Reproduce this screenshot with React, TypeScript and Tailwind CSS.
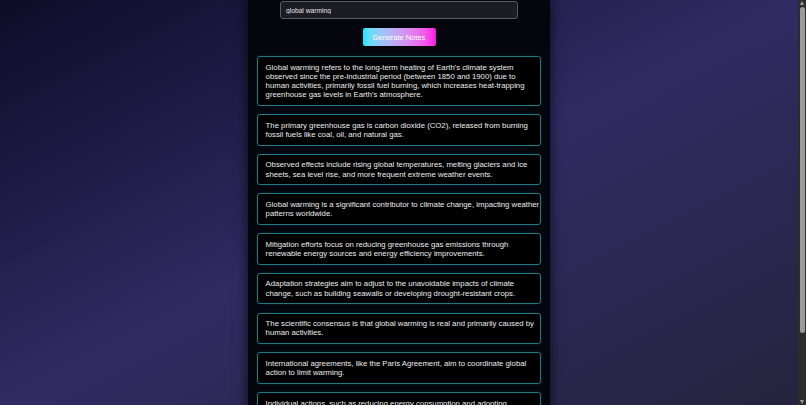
import React from "react";

const notes: string[][] = [
  [
    "Global warming refers to the long-term heating of Earth's climate system",
    "observed since the pre-industrial period (between 1850 and 1900) due to",
    "human activities, primarily fossil fuel burning, which increases heat-trapping",
    "greenhouse gas levels in Earth's atmosphere.",
  ],
  [
    "The primary greenhouse gas is carbon dioxide (CO2), released from burning",
    "fossil fuels like coal, oil, and natural gas.",
  ],
  [
    "Observed effects include rising global temperatures, melting glaciers and ice",
    "sheets, sea level rise, and more frequent extreme weather events.",
  ],
  [
    "Global warming is a significant contributor to climate change, impacting weather",
    "patterns worldwide.",
  ],
  [
    "Mitigation efforts focus on reducing greenhouse gas emissions through",
    "renewable energy sources and energy efficiency improvements.",
  ],
  [
    "Adaptation strategies aim to adjust to the unavoidable impacts of climate",
    "change, such as building seawalls or developing drought-resistant crops.",
  ],
  [
    "The scientific consensus is that global warming is real and primarily caused by",
    "human activities.",
  ],
  [
    "International agreements, like the Paris Agreement, aim to coordinate global",
    "action to limit warming.",
  ],
  [
    "Individual actions, such as reducing energy consumption and adopting",
    "sustainable practices, can help reduce carbon footprints.",
  ],
  [
    "Continued warming is projected to increase risks to ecosystems, food",
    "security, water supplies, and human health.",
  ],
];

export default function App() {
  return (
    <div
      className="flex h-screen w-full overflow-hidden"
      style={{ fontFamily: '"Liberation Sans", Arial, sans-serif' }}
    >
      <div className="h-full flex-1 overflow-hidden bg-linear-to-br from-[#0f0c29] via-[#302b63] to-[#24243e]">
        <div className="mx-auto flex min-h-full w-[302px] flex-col bg-[#05050d] px-[9px] pt-[1px] pb-[25px] shadow-[0_0_12px_rgba(0,0,0,0.7)]">
          <input
            defaultValue="global warming"
            className="mx-auto h-[18px] w-[238px] rounded-[3px] border border-[#5a5a60] bg-[#1c1c24] px-[5px] text-[6.7px] leading-[8px] text-[#e4e4e4] outline-none"
          />
          <button className="mx-auto mt-[9px] h-[18px] w-[73px] rounded-[2px] bg-linear-to-r from-[#00eaff] to-[#ff00e6] text-[7.5px] leading-[9px] text-white">
            Generate Notes
          </button>
          <div className="mt-[10px] flex flex-col gap-[8.1px]">
            {notes.map((lines, i) => (
              <div
                key={i}
                className="rounded-[3px] border border-[#1d7a80] bg-black px-[7.6px] py-[5.6px] text-[7.75px] leading-[9.2px] text-[#ececec] shadow-[0_0_3px_rgba(0,200,210,0.15)]"
              >
                {lines.map((l, j) => (
                  <span key={j} className="block whitespace-nowrap">
                    {l}
                  </span>
                ))}
              </div>
            ))}
          </div>
        </div>
      </div>
      <div className="flex h-full w-[8px] flex-col items-center bg-[#2c2c2c] py-[1px]">
        <div className="h-0 w-0 border-x-[2.5px] border-b-[4px] border-x-transparent border-b-[#9a9a9a]" />
        <div className="mt-[2px] h-[326px] w-[5px] rounded-full bg-[#9a9a9a]" />
        <div className="flex-1" />
        <div className="h-0 w-0 border-x-[2.5px] border-t-[4px] border-x-transparent border-t-[#9a9a9a]" />
      </div>
    </div>
  );
}
